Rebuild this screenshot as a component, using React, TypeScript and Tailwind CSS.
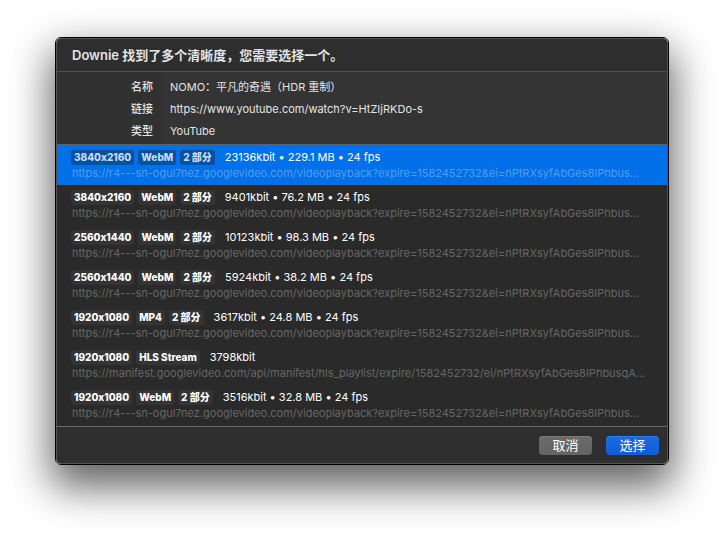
import { useState } from "react";

const PLAYBACK_URL =
  "https://r4---sn-ogul7nez.googlevideo.com/videoplayback?expire=1582452732&ei=nPtRXsyfAbGes8IPhbus...";
const MANIFEST_URL =
  "https://manifest.googlevideo.com/api/manifest/hls_playlist/expire/1582452732/ei/nPtRXsyfAbGes8IPhbusqA...";

const details = [
  { label: "名称", value: "NOMO：平凡的奇遇（HDR 重制）" },
  { label: "链接", value: "https://www.youtube.com/watch?v=HtZIjRKDo-s" },
  { label: "类型", value: "YouTube" },
];

const qualities = [
  { tags: ["3840x2160", "WebM", "2 部分"], info: "23136kbit • 229.1 MB • 24 fps", url: PLAYBACK_URL },
  { tags: ["3840x2160", "WebM", "2 部分"], info: "9401kbit • 76.2 MB • 24 fps", url: PLAYBACK_URL },
  { tags: ["2560x1440", "WebM", "2 部分"], info: "10123kbit • 98.3 MB • 24 fps", url: PLAYBACK_URL },
  { tags: ["2560x1440", "WebM", "2 部分"], info: "5924kbit • 38.2 MB • 24 fps", url: PLAYBACK_URL },
  { tags: ["1920x1080", "MP4", "2 部分"], info: "3617kbit • 24.8 MB • 24 fps", url: PLAYBACK_URL },
  { tags: ["1920x1080", "HLS Stream"], info: "3798kbit", url: MANIFEST_URL },
  { tags: ["1920x1080", "WebM", "2 部分"], info: "3516kbit • 32.8 MB • 24 fps", url: PLAYBACK_URL },
];

export default function App() {
  const [selected, setSelected] = useState(0);

  return (
    <main className="min-h-screen overflow-hidden bg-white px-[55px] pt-[37px] font-['Inter','Noto_Sans_CJK_SC',sans-serif] text-[11px] text-[#e4e4e4] [font-variant-ligatures:no-contextual]">
      <section className="rounded-[6px] border border-black shadow-[0_18px_40px_4px_rgba(0,0,0,0.62)]">
        <div className="overflow-hidden rounded-[5px] border border-[#545454] bg-[#2e2e2e]">
          <h1 className="flex h-[33px] items-center border-b border-[#505050] px-[15px] pt-0.5 text-[13px] font-semibold">
            Downie 找到了多个清晰度，您需要选择一个。
          </h1>

          <dl className="border-b border-[#606060] bg-[#343434]">
            {details.map((item) => (
              <div key={item.label} className="group flex leading-[22px]">
                <dt className="w-[105px] bg-[#313131] pr-[9px] text-right font-medium group-first:pt-1 group-last:pb-0.5">
                  {item.label}
                </dt>
                <dd className="flex-1 pl-2 group-first:pt-1 group-last:pb-0.5">{item.value}</dd>
              </div>
            ))}
          </dl>

          <div role="radiogroup" aria-label="清晰度" className="bg-[#2a2a2a] pb-px">
            {qualities.map((q, i) => (
              <label
                key={i}
                className="block h-10 px-3.5 pt-1 text-white has-checked:bg-[#0270e8]"
              >
                <input
                  type="radio"
                  name="quality"
                  className="sr-only"
                  checked={selected === i}
                  onChange={() => setSelected(i)}
                />
                <span
                  className={`flex h-4 items-center gap-1 ${selected === i ? "text-[#c8dcf4]" : "text-white"}`}
                >
                  {q.tags.map((tag) => (
                    <span
                      key={tag}
                      className={`rounded-[3px] px-[3px] text-[10px] leading-[15px] font-extrabold ${selected === i ? "bg-[#0a50a0]" : "bg-[#343434]"}`}
                    >
                      {tag}
                    </span>
                  ))}
                  <span className="pl-1.5 whitespace-nowrap text-white">{q.info}</span>
                </span>
                <span
                  className={`block truncate pl-px leading-4 ${selected === i ? "text-[#549de9]" : "text-[#666666]"}`}
                >
                  {q.url}
                </span>
              </label>
            ))}
          </div>

          <footer className="flex items-center justify-end gap-3.5 border-t border-[#6a6a6a] px-2 pt-[9px] pb-2 text-[13px] text-white">
            <button
              type="button"
              className="h-[19px] w-[53px] rounded-[4px] bg-linear-to-b from-[#6b6b6b] to-[#636363] leading-[19px] shadow-[inset_0_1px_0_#7b7b7b]"
            >
              取消
            </button>
            <button
              type="button"
              className="h-[19px] w-[53px] rounded-[4px] bg-linear-to-b from-[#1a6ae4] to-[#105cd6] leading-[19px] shadow-[inset_0_1px_0_#2f7cec]"
            >
              选择
            </button>
          </footer>
        </div>
      </section>
    </main>
  );
}
